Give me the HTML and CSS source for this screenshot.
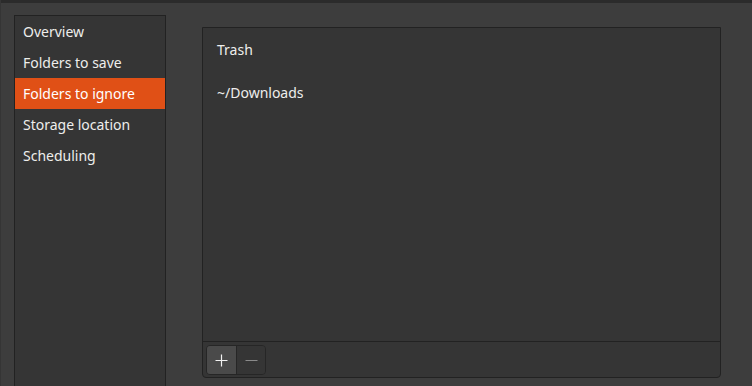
FILE: index.html
```html
<!DOCTYPE html>
<html>
<head>
<meta charset="utf-8">
<link rel="stylesheet" href="styles.css">
</head>
<body>
<div class="topbar"></div>
<div class="window">
  <nav class="sidebar">
    <div class="item">Overview</div>
    <div class="item">Folders to save</div>
    <div class="item selected">Folders to ignore</div>
    <div class="item">Storage location</div>
    <div class="item">Scheduling</div>
  </nav>
  <section class="content">
    <div class="listbox">
      <div class="list">
        <div class="row">Trash</div>
        <div class="row">~/Downloads</div>
      </div>
      <div class="toolbar">
        <div class="btngroup">
          <button class="btn add" type="button">
            <svg width="13" height="13" viewBox="0 0 13 13"><path d="M6.5 0.5V12.5M0.5 6.5H12.5" stroke="#f2f2f2" stroke-width="1.2" fill="none"/></svg>
          </button>
          <button class="btn remove" type="button">
            <svg width="13" height="13" viewBox="0 0 13 13"><path d="M0.5 6.5H12.5" stroke="#8a8a8a" stroke-width="1.2" fill="none"/></svg>
          </button>
        </div>
      </div>
    </div>
  </section>
</div>
</body>
</html>
```

FILE: styles.css
```css
html, body {
  margin: 0;
  padding: 0;
  height: 100%;
  overflow: hidden;
}
body {
  background: #3d3d3d;
  font-family: "Noto Sans", "Open Sans", sans-serif;
  font-size: 14px;
  color: #eeeeec;
  border-left: 1px solid #353535;
  box-sizing: border-box;
}
.topbar {
  height: 3px;
  background: #2b2b2b;
}
.window {
  display: flex;
  height: calc(100% - 3px);
}
.sidebar {
  margin: 12px 0 0 13px;
  width: 150px;
  background: #353535;
  border: 1px solid #222222;
  border-bottom: none;
  padding-top: 0;
  display: flex;
  flex-direction: column;
}
.item {
  height: 31px;
  line-height: 31px;
  padding-left: 8px;
  white-space: nowrap;
}
.item.selected {
  background: #e05016;
  color: #ffffff;
}
.content {
  flex: 1;
  padding: 24px 31px 8px 36px;
  display: flex;
}
.listbox {
  flex: 1;
  display: flex;
  flex-direction: column;
  background: #353535;
  border: 1px solid #222222;
  border-radius: 0 0 4px 4px;
}
.list {
  flex: 1;
  padding-top: 0;
}
.row {
  height: 43px;
  line-height: 43px;
  padding-left: 14px;
}
.toolbar {
  border-top: 1px solid #222222;
  height: 36px;
  padding: 3px 0 0 3px;
  box-sizing: border-box;
}
.btngroup {
  display: inline-flex;
  border: 1px solid #262626;
  border-radius: 4px;
  overflow: hidden;
  height: 30px;
  box-sizing: border-box;
}
.btn {
  width: 30px;
  height: 28px;
  border: none;
  margin: 0;
  padding: 0;
  display: flex;
  align-items: center;
  justify-content: center;
  background: #353535;
}
.btn.add {
  background: #4a4a4a;
  border-right: 1px solid #262626;
}
.btn.remove {
  width: 28px;
}
```
